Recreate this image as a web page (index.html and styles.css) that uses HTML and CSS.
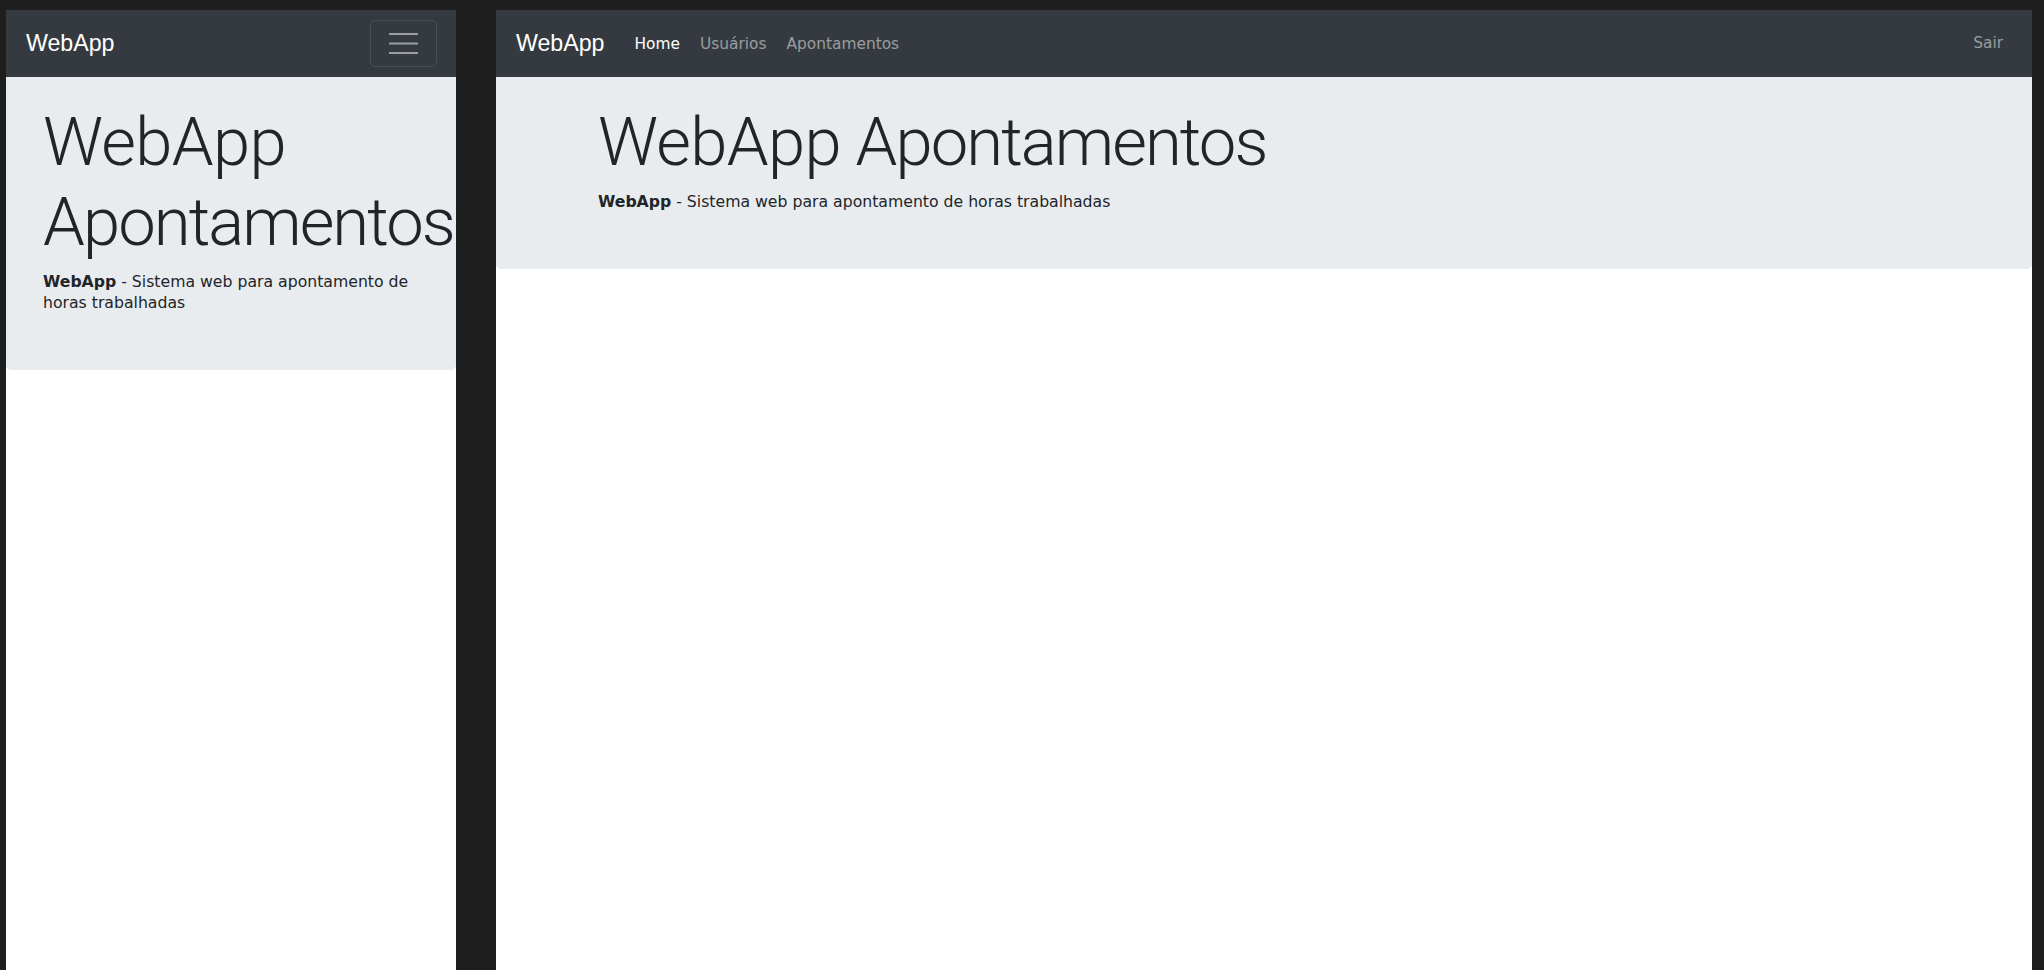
FILE: index.html
```html
<!DOCTYPE html>
<html lang="pt-BR">
<head>
<meta charset="utf-8">
<title>WebApp Apontamentos</title>
<link rel="stylesheet" href="styles.css">
</head>
<body>
<div class="screen">
  <div class="panel panel-mobile">
    <nav class="navbar">
      <a class="brand" href="#">WebApp</a>
      <button class="toggler" type="button" aria-label="Menu">
        <svg width="29" height="22" viewBox="0 0 29 22" aria-hidden="true">
          <rect x="0" y="0" width="29" height="2" fill="#9a9ea3"/>
          <rect x="0" y="9.5" width="29" height="2" fill="#9a9ea3"/>
          <rect x="0" y="19" width="29" height="2" fill="#9a9ea3"/>
        </svg>
      </button>
    </nav>
    <section class="jumbo jumbo-mobile">
      <h1 class="display"><span class="w1">WebApp</span> <span class="w2">Apontamentos</span></h1>
      <p class="lead-text"><strong>WebApp</strong> - Sistema web para apontamento de horas trabalhadas</p>
    </section>
  </div>
  <div class="panel panel-desktop">
    <nav class="navbar">
      <a class="brand" href="#">WebApp</a>
      <ul class="nav-links">
        <li><a class="nav-link active" href="#">Home</a></li>
        <li><a class="nav-link" href="#">Usuários</a></li>
        <li><a class="nav-link" href="#">Apontamentos</a></li>
      </ul>
      <a class="nav-link sair" href="#">Sair</a>
    </nav>
    <section class="jumbo jumbo-desktop">
      <div class="container">
        <h1 class="display"><span class="w1">WebApp</span> <span class="w2">Apontamentos</span></h1>
        <p class="lead-text"><strong>WebApp</strong> - Sistema web para apontamento de horas trabalhadas</p>
      </div>
    </section>
  </div>
</div>
</body>
</html>
```
FILE: styles.css
```css
* { box-sizing: border-box; }

html, body {
  margin: 0;
  padding: 0;
  height: 100%;
}

body {
  background: #1e1e1e;
  font-family: "DejaVu Sans", Verdana, sans-serif;
  color: #212529;
  overflow: hidden;
}

.screen {
  display: flex;
  gap: 40px;
  padding: 10px 0 0 6px;
  height: 970px;
}

.panel {
  background: #ffffff;
  height: 960px;
  overflow: hidden;
}

.panel-mobile { width: 450px; }
.panel-desktop { width: 1536px; }

.navbar {
  height: 67px;
  background: #343a40;
  display: flex;
  align-items: center;
  padding: 0 19px 0 20px;
}

.panel-desktop .navbar { padding: 0 29px 0 20px; }

.brand {
  font-family: "Liberation Sans", Arial, sans-serif;
  font-size: 23.2px;
  color: #ffffff;
  text-decoration: none;
  line-height: 1;
  margin-right: 30px;
}

.panel-mobile .brand { margin-right: auto; }

.toggler {
  width: 67px;
  height: 47px;
  border: 1px solid rgba(255, 255, 255, 0.1);
  border-radius: 5px;
  background: transparent;
  display: flex;
  align-items: center;
  justify-content: center;
  padding: 0;
}

.toggler svg { display: block; }

.nav-links {
  list-style: none;
  margin: 0 auto 0 0;
  padding: 0;
  display: flex;
  gap: 20px;
}

.nav-link {
  font-family: "DejaVu Sans", Verdana, sans-serif;
  font-size: 15.4px;
  color: rgba(255, 255, 255, 0.5);
  text-decoration: none;
  line-height: 1;
}

.nav-link.active { color: #ffffff; }

.jumbo {
  background: #e9ecef;
  border-radius: 0 0 5px 5px;
}

.jumbo-mobile {
  padding: 25px 30px 38px 37px;
}

.jumbo-desktop {
  padding: 25px 0 38px 102px;
}

.display {
  margin: 0 0 9px 0;
  font-family: Roboto, "Liberation Sans", sans-serif;
  font-weight: 300;
  font-size: 67px;
  line-height: 80px;
  letter-spacing: -1.6px;
  color: #212529;
}

.display .w1 { letter-spacing: -0.7px; }
.display .w2 { letter-spacing: -1.95px; }

.lead-text {
  margin: 0 0 19px 0;
  font-size: 15.7px;
  line-height: 21px;
  color: #212529;
}

.lead-text strong { font-weight: 700; }
```
